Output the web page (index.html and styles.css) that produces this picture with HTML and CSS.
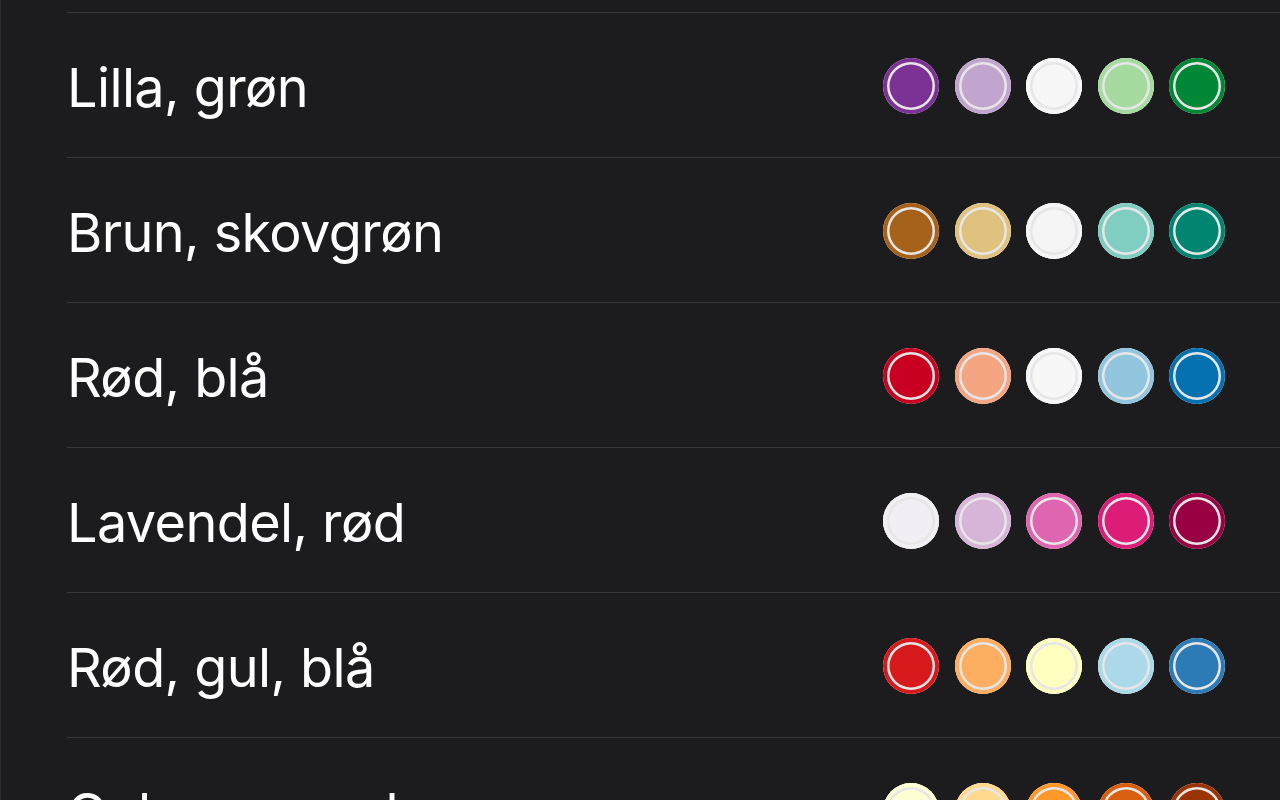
FILE: index.html
```html
<!DOCTYPE html>
<html lang="da">
<head>
<meta charset="utf-8">
<title>Farveskalaer</title>
<link rel="stylesheet" href="styles.css">
</head>
<body>
<div class="screen">
  <ul class="list">
    <li class="row">
      <span class="label">Lilla, grøn</span>
      <span class="swatches">
        <span class="dot" style="--c:#7b3294"></span>
        <span class="dot" style="--c:#c2a5cf"></span>
        <span class="dot" style="--c:#f7f7f7"></span>
        <span class="dot" style="--c:#a6dba0"></span>
        <span class="dot" style="--c:#008837"></span>
      </span>
    </li>
    <li class="row">
      <span class="label">Brun, skovgrøn</span>
      <span class="swatches">
        <span class="dot" style="--c:#a6611a"></span>
        <span class="dot" style="--c:#dfc27d"></span>
        <span class="dot" style="--c:#f5f5f5"></span>
        <span class="dot" style="--c:#80cdc1"></span>
        <span class="dot" style="--c:#018571"></span>
      </span>
    </li>
    <li class="row">
      <span class="label">Rød, blå</span>
      <span class="swatches">
        <span class="dot" style="--c:#ca0020"></span>
        <span class="dot" style="--c:#f4a582"></span>
        <span class="dot" style="--c:#f7f7f7"></span>
        <span class="dot" style="--c:#92c5de"></span>
        <span class="dot" style="--c:#0571b0"></span>
      </span>
    </li>
    <li class="row">
      <span class="label">Lavendel, rød</span>
      <span class="swatches">
        <span class="dot" style="--c:#f1eef6"></span>
        <span class="dot" style="--c:#d7b5d8"></span>
        <span class="dot" style="--c:#df65b0"></span>
        <span class="dot" style="--c:#dd1c77"></span>
        <span class="dot" style="--c:#980043"></span>
      </span>
    </li>
    <li class="row">
      <span class="label">Rød, gul, blå</span>
      <span class="swatches">
        <span class="dot" style="--c:#d7191c"></span>
        <span class="dot" style="--c:#fdae61"></span>
        <span class="dot" style="--c:#ffffbf"></span>
        <span class="dot" style="--c:#abd9e9"></span>
        <span class="dot" style="--c:#2c7bb6"></span>
      </span>
    </li>
    <li class="row">
      <span class="label">Gul, orange, brun</span>
      <span class="swatches">
        <span class="dot" style="--c:#ffffd4"></span>
        <span class="dot" style="--c:#fed98e"></span>
        <span class="dot" style="--c:#fe9929"></span>
        <span class="dot" style="--c:#d95f0e"></span>
        <span class="dot" style="--c:#993404"></span>
      </span>
    </li>
  </ul>
</div>
</body>
</html>
```

FILE: styles.css
```css
html, body {
  margin: 0;
  padding: 0;
  height: 100%;
  overflow: hidden;
  background: #1c1c1e;
}

.screen {
  height: 800px;
  box-sizing: border-box;
  border-left: 1px solid #2c2c2e;
  padding-top: 12px;
  font-family: Inter, "Noto Sans", "Liberation Sans", sans-serif;
  color: #ffffff;
}

.list {
  list-style: none;
  margin: 0 0 0 66px;
  padding: 0;
}

.row {
  display: flex;
  align-items: center;
  justify-content: space-between;
  height: 145px;
  box-sizing: border-box;
  border-top: 1px solid #38383a;
  padding-right: 55px;
}

.label {
  font-size: 54px;
  line-height: 1;
  letter-spacing: -0.6px;
  padding-top: 5px;
}

.swatches {
  display: flex;
  gap: 15.5px;
  padding-top: 2px;
}

.dot {
  width: 56px;
  height: 56px;
  border-radius: 50%;
  background: var(--c);
  box-shadow: inset 0 0 0 4px var(--c), inset 0 0 0 6.5px #e6e6e6;
}
```
